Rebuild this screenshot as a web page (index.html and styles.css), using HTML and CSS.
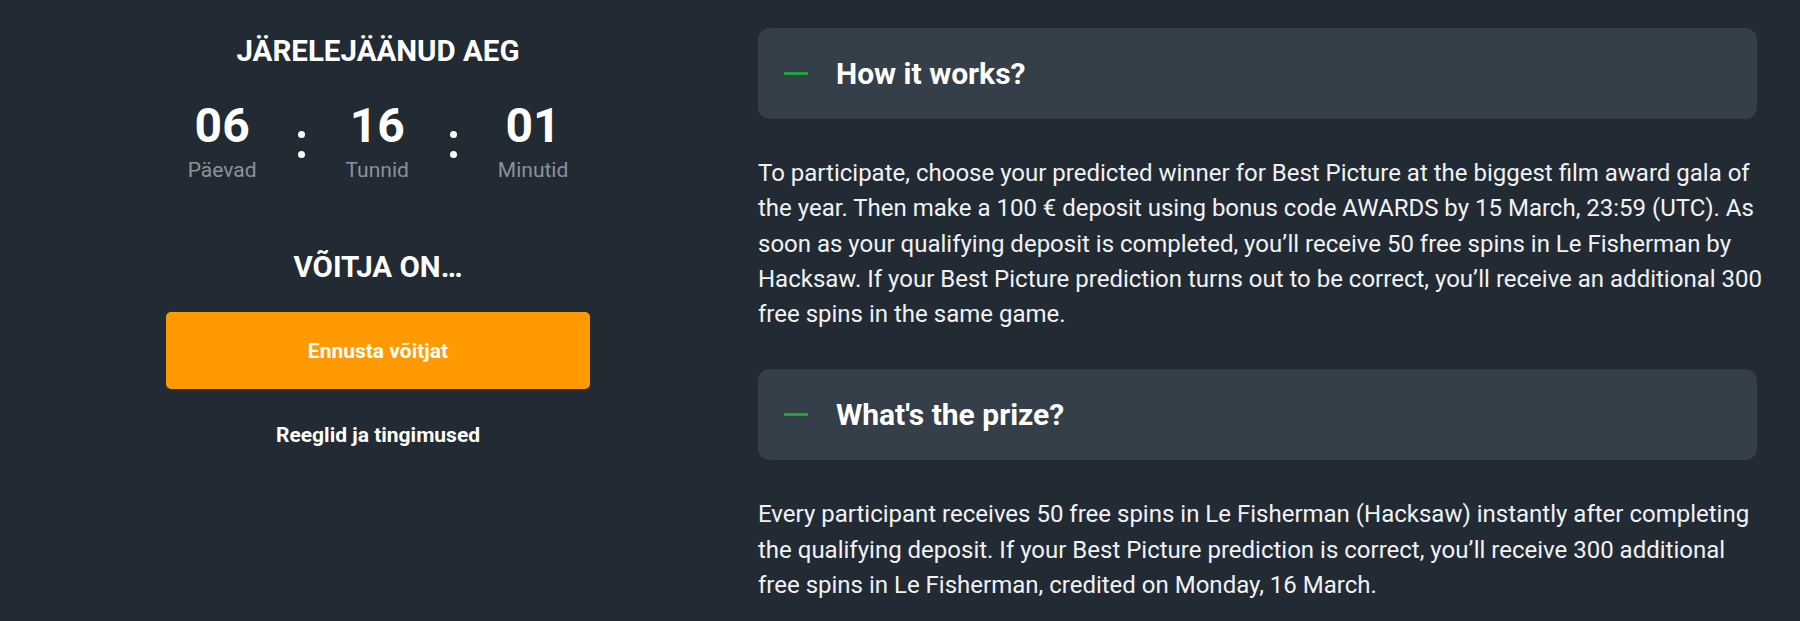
FILE: index.html
```html
<!DOCTYPE html>
<html lang="et">
<head>
<meta charset="utf-8">
<title>Awards</title>
<link rel="stylesheet" href="styles.css">
</head>
<body>
<main class="page">
  <section class="side">
    <h2 class="side-title">JÄRELEJÄÄNUD AEG</h2>
    <div class="timer">
      <div class="unit"><span class="num">06</span><span class="lbl">Päevad</span></div>
      <div class="colon"><i></i><i></i></div>
      <div class="unit"><span class="num">16</span><span class="lbl">Tunnid</span></div>
      <div class="colon"><i></i><i></i></div>
      <div class="unit"><span class="num">01</span><span class="lbl">Minutid</span></div>
    </div>
    <h2 class="side-title winner">VÕITJA ON…</h2>
    <a class="btn" href="#">Ennusta võitjat</a>
    <a class="rules" href="#">Reeglid ja tingimused</a>
  </section>
  <section class="content">
    <div class="acc-head"><span class="dash"></span><h3>How it works?</h3></div>
    <p class="acc-body">To participate, choose your predicted winner for Best Picture at the biggest film award gala of the&nbsp;year. Then make a 100 € deposit using bonus code AWARDS by 15 March, 23:59 (UTC). As soon as your qualifying deposit is completed, you’ll receive 50 free spins in Le Fisherman by Hacksaw. If your Best Picture prediction turns out to be correct, you’ll receive an additional 300 free spins in the same game.</p>
    <div class="acc-head"><span class="dash"></span><h3>What's the prize?</h3></div>
    <p class="acc-body">Every participant receives 50 free spins in Le Fisherman (Hacksaw) instantly after completing the qualifying deposit. If your Best Picture prediction is correct, you’ll receive 300 additional free spins in Le Fisherman, credited on Monday, 16 March.</p>
  </section>
</main>
</body>
</html>
```

FILE: styles.css
```css
html, body {
  margin: 0;
  padding: 0;
  background: #222a34;
  height: 100%;
  overflow: hidden;
}
body {
  font-family: Roboto, "Liberation Sans", Arial, sans-serif;
  color: #f1f2f4;
}
.page {
  display: flex;
  gap: 168px;
  padding: 28px 43px 0 166px;
}
.side {
  width: 424px;
  flex: none;
  display: flex;
  flex-direction: column;
  align-items: center;
  padding-top: 5px;
}
.side-title {
  margin: 0;
  font-size: 29.5px;
  line-height: 36px;
  font-weight: 700;
  color: #fff;
}
.timer {
  display: flex;
  gap: 41px;
  margin-top: 33px;
}
.unit {
  display: flex;
  flex-direction: column;
  align-items: center;
}
.num {
  font-size: 48px;
  line-height: 48px;
  font-weight: 700;
  color: #fff;
}
.lbl {
  margin-top: 8px;
  font-size: 21px;
  line-height: 24px;
  color: #8a929b;
}
.colon {
  display: flex;
  flex-direction: column;
  gap: 13px;
  margin-top: 29px;
  width: 7px;
}
.colon i {
  display: block;
  width: 7px;
  height: 7px;
  border-radius: 50%;
  background: #fff;
}
.winner {
  margin-top: 67px;
}
.btn {
  display: flex;
  align-items: center;
  justify-content: center;
  align-self: stretch;
  height: 77px;
  margin-top: 27px;
  background: #ff9900;
  border-radius: 5px;
  color: #fff;
  text-decoration: none;
  font-size: 21px;
  font-weight: 700;
}
.rules {
  margin-top: 34px;
  font-size: 21px;
  line-height: 24px;
  font-weight: 700;
  color: #fff;
  text-decoration: none;
}
.content {
  width: 999px;
  flex: none;
}
.acc-head {
  display: flex;
  align-items: center;
  gap: 28px;
  height: 91px;
  padding-left: 26px;
  background: #353f4a;
  border-radius: 12px;
}
.dash {
  width: 24px;
  height: 3px;
  background: #22a13c;
  flex: none;
}
.acc-head h3 {
  margin: 0;
  font-size: 30px;
  line-height: 36px;
  font-weight: 700;
  color: #fff;
}
.acc-body {
  margin: 37px -12px 37px 0;
  font-size: 24px;
  line-height: 35.3px;
}
```
